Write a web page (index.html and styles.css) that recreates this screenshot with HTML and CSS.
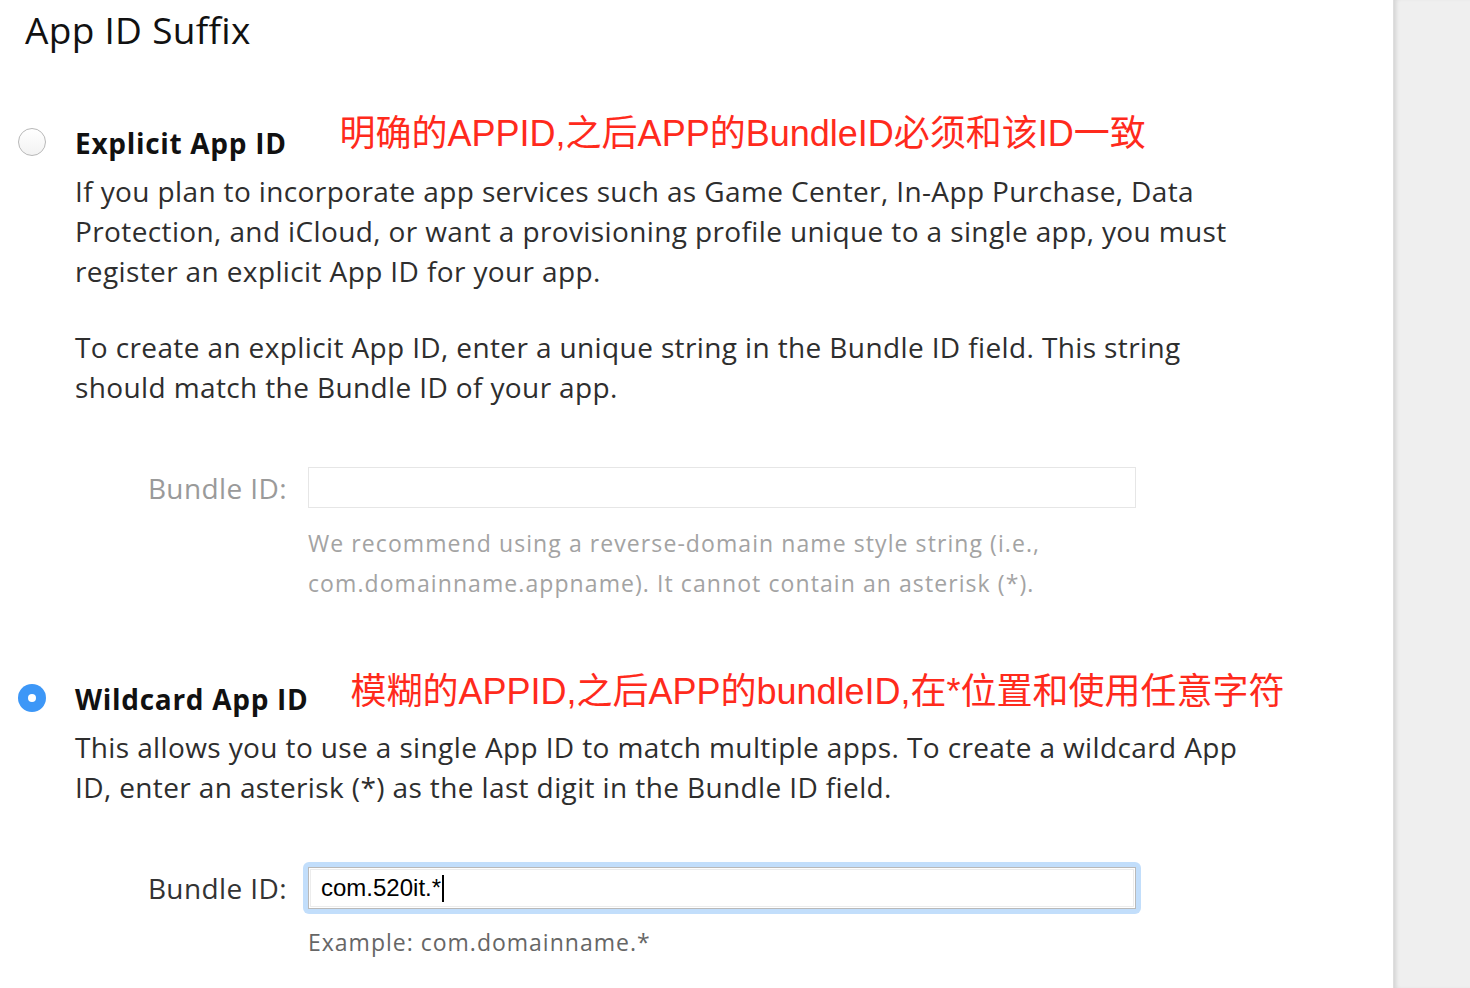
FILE: index.html
```html
<!DOCTYPE html>
<html lang="en">
<head>
<meta charset="utf-8">
<title>App ID Suffix</title>
<link rel="stylesheet" href="styles.css">
</head>
<body>
<div class="page">
  <main class="content">
    <h1 class="title">App ID Suffix</h1>

    <section class="option">
      <div class="option-head">
        <span class="radio"></span>
        <span class="option-name">Explicit App ID</span>
        <span class="note note-explicit">明确的APPID,之后APP的BundleID必须和该ID一致</span>
      </div>
      <div class="option-body">
        <p class="desc">If you plan to incorporate app services such as Game Center, In-App Purchase, Data Protection, and iCloud, or want a provisioning profile unique to a single app, you must register an explicit App ID for your app.</p>
        <p class="desc desc-gap">To create an explicit App ID, enter a unique string in the Bundle ID field. This string should match the Bundle ID of your app.</p>
        <div class="field-row field-row-disabled">
          <label class="field-label">Bundle ID:</label>
          <div class="field-ring">
            <div class="field-input"></div>
          </div>
        </div>
        <p class="hint hint-muted">We recommend using a reverse-domain name style string (i.e., com.domainname.appname). It cannot contain an asterisk (*).</p>
      </div>
    </section>

    <section class="option option-wild">
      <div class="option-head">
        <span class="radio radio-checked"></span>
        <span class="option-name">Wildcard App ID</span>
        <span class="note note-wild">模糊的APPID,之后APP的bundleID,在*位置和使用任意字符</span>
      </div>
      <div class="option-body">
        <p class="desc">This allows you to use a single App ID to match multiple apps. To create a wildcard App ID, enter an asterisk (*) as the last digit in the Bundle ID field.</p>
        <div class="field-row field-row-active">
          <label class="field-label">Bundle ID:</label>
          <div class="field-ring field-ring-focus">
            <div class="field-input field-input-focus"><span class="field-value">com.520it.*</span><span class="caret"></span></div>
          </div>
        </div>
        <p class="hint hint-example">Example: com.domainname.*</p>
      </div>
    </section>
  </main>
  <aside class="sidebar"></aside>
</div>
</body>
</html>
```

FILE: styles.css
```css
html, body {
  margin: 0;
  padding: 0;
  background: #ffffff;
}

body {
  font-family: "Open Sans", "Lato", "DejaVu Sans", sans-serif;
  color: #2e2e2e;
}

.page {
  display: flex;
  width: 1470px;
  height: 988px;
  overflow: hidden;
}

.content {
  flex: 1;
  padding: 10px 0 0 18px;
  background: #ffffff;
}

.sidebar {
  width: 76px;
  flex: none;
  background: #efefef;
  box-shadow: inset 4px 0 4px -2px rgba(0, 0, 0, 0.12);
  border-left: 1px solid #dedede;
}

.title {
  margin: 0 0 0 7px;
  font-size: 37px;
  line-height: 40px;
  font-weight: 400;
  letter-spacing: 0.3px;
  color: #111111;
}

.option {
  margin-top: 72px;
}

.option-wild {
  margin-top: 75px;
}

.option-head {
  display: flex;
  align-items: center;
  height: 40px;
}

.radio {
  flex: none;
  box-sizing: border-box;
  width: 28px;
  height: 28px;
  border-radius: 50%;
  border: 1px solid #b8b8b8;
  background: linear-gradient(#ffffff, #f2f2f2);
  margin-right: 29px;
}

.radio-checked {
  border: none;
  background: #3d97f7;
  display: flex;
  align-items: center;
  justify-content: center;
}

.radio-checked::after {
  content: "";
  width: 8px;
  height: 8px;
  border-radius: 50%;
  background: #ffffff;
}

.option-name {
  font-size: 28px;
  font-weight: 700;
  color: #111111;
  line-height: 40px;
  letter-spacing: 0.7px;
  position: relative;
  top: 1px;
}

.note {
  font-family: "Liberation Sans", "Noto Sans CJK SC", sans-serif;
  font-size: 36px;
  color: #ff2a1c;
  line-height: 40px;
  position: relative;
  top: -8px;
}

.note-explicit {
  margin-left: 53px;
}

.note-wild {
  margin-left: 42px;
  top: -6px;
}

.option-body {
  padding-left: 57px;
}

.desc {
  margin: 9px 0 0 0;
  font-size: 28px;
  line-height: 40px;
  letter-spacing: 0.38px;
  color: #2e2e2e;
  max-width: 1180px;
}

.desc-gap {
  margin-top: 36px;
}

.field-row {
  display: flex;
  align-items: center;
  margin-top: 55px;
}

.field-label {
  width: 212px;
  text-align: right;
  font-size: 28px;
  letter-spacing: 0.4px;
  line-height: 40px;
  margin-right: 16px;
}

.field-row-disabled .field-label {
  color: #9a9a9a;
}

.field-row-active .field-label {
  color: #333333;
}

.field-ring {
  padding: 5px;
  border-radius: 6px;
}

.field-ring-focus {
  background: #c2defb;
}

.field-input {
  box-sizing: border-box;
  width: 828px;
  height: 41px;
  border: 1px solid #e6e6e6;
  background: #ffffff;
}

.field-input-focus {
  height: 42px;
  border: 1px solid #b9b9b9;
  box-shadow: inset 0 0 0 1px #ffffff, inset 0 0 0 2px #ececec;
  display: flex;
  align-items: center;
  padding-left: 12px;
  font-family: "Liberation Sans", Arial, sans-serif;
  font-size: 24px;
  color: #000000;
}

.caret {
  display: inline-block;
  width: 2px;
  height: 27px;
  background: #000000;
  margin-left: 1px;
}

.hint {
  margin: 10px 0 0 233px;
  font-size: 23px;
  line-height: 40px;
  letter-spacing: 1.08px;
  max-width: 760px;
}

.hint-muted {
  color: #a3a3a3;
}

.hint-example {
  color: #666666;
  margin-top: 8px;
  letter-spacing: 1px;
}
```
